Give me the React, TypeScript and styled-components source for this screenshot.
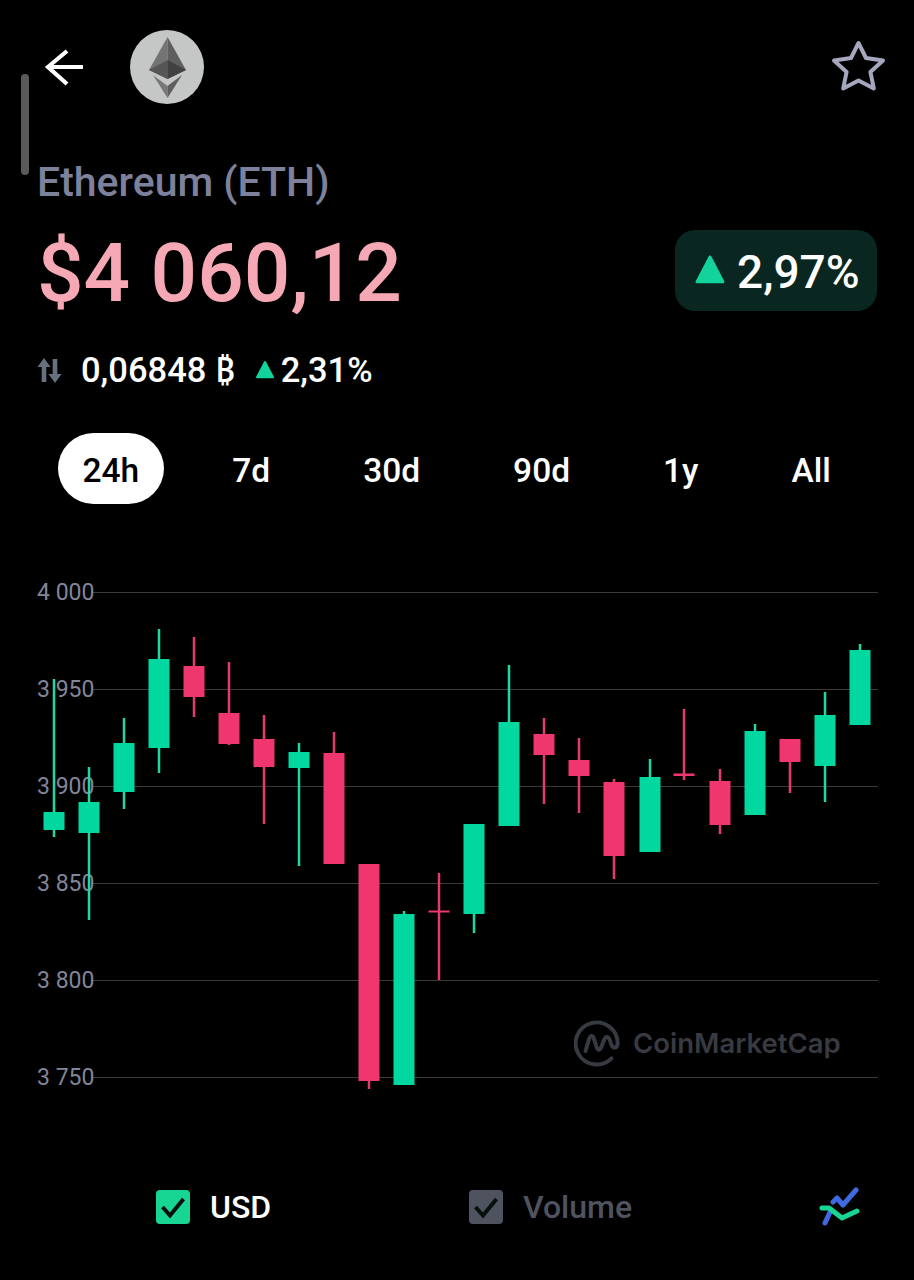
import React from "react";
import styled, { createGlobalStyle } from "styled-components";

const Global = createGlobalStyle`
  html, body { margin: 0; padding: 0; background: #000; }
  body { font-family: Roboto, "Noto Sans", sans-serif; }
`;

const Page = styled.div`
  position: relative;
  width: 914px;
  height: 1280px;
  overflow: hidden;
  background: #000;
  color: #fff;
`;

const ScrollThumb = styled.div`
  position: absolute;
  left: 21px;
  top: 74px;
  width: 8px;
  height: 101px;
  border-radius: 4px;
  background: #5a5a5a;
`;

const Header = styled.header`
  display: flex;
  align-items: center;
  height: 74px;
  padding: 30px 28px 0 43px;
`;

const IconSlot = styled.div`
  display: flex;
  margin-right: 44px;
`;

const Coin = styled.div`
  display: flex;
  flex: 1;
`;

const Title = styled.h1`
  margin: 56px 0 0 37px;
  font-size: 41px;
  line-height: 44px;
  font-weight: 500;
  color: #7d819b;
`;

const PriceRow = styled.div`
  display: flex;
  align-items: center;
  justify-content: space-between;
  height: 82px;
  margin-top: 25px;
  padding: 0 37px;
`;

const Price = styled.div`
  padding-top: 6px;
  font-size: 82px;
  line-height: 82px;
  font-weight: 500;
  color: #f6a9b4;
`;

const Badge = styled.div`
  display: flex;
  align-items: center;
  gap: 11px;
  width: 202px;
  height: 81px;
  box-sizing: border-box;
  padding-left: 19px;
  border-radius: 20px;
  background: #0a2620;
  font-size: 46px;
  font-weight: 500;
`;

const BadgeValue = styled.span`
  padding-top: 3px;
`;

const SubRow = styled.div`
  display: flex;
  align-items: center;
  height: 40px;
  margin-top: 39px;
  padding-left: 37px;
  font-size: 34.5px;
  line-height: 40px;
  font-weight: 500;
`;

const Rate = styled.span`
  margin-left: 19px;
`;

const Percent = styled.span`
  margin-left: 6px;
`;

const Triangle = styled.svg`
  display: block;
  flex: none;
`;

const SmallTriangle = styled(Triangle)`
  margin-left: 20px;
`;

const Tabs = styled.nav`
  display: flex;
  gap: 44px;
  margin-top: 43px;
  padding-left: 58px;
`;

const Tab = styled.div<{ $active?: boolean }>`
  height: 71px;
  padding: 0 24.5px;
  border-radius: 36px;
  font-size: 33.5px;
  font-weight: 500;
  line-height: 75px;
  color: ${(p) => (p.$active ? "#000" : "#fff")};
  background: ${(p) => (p.$active ? "#fff" : "transparent")};
`;

const ChartArea = styled.section`
  position: relative;
  height: 540px;
  margin-top: 66px;
`;

const ChartSvg = styled.svg`
  display: block;
`;

const AxisLabel = styled.text`
  font-family: Roboto, sans-serif;
  font-size: 23px;
  fill: #82859a;
`;

const Watermark = styled.div`
  position: absolute;
  left: 574px;
  top: 449px;
  display: flex;
  align-items: center;
  gap: 13px;
  font-family: Inter, sans-serif;
  font-size: 27.5px;
  font-weight: 600;
  color: #383a42;
`;

const Legend = styled.footer`
  display: grid;
  grid-template-columns: 313px 1fr auto;
  align-items: center;
  height: 40px;
  margin-top: 77px;
  padding: 0 53px 0 156px;
  font-size: 32px;
  font-weight: 500;
`;

const LegendItem = styled.div<{ $muted?: boolean }>`
  display: flex;
  align-items: center;
  gap: 20px;
  color: ${(p) => (p.$muted ? "#4f535f" : "#fff")};
`;

type Candle = [number, number, number, number, number, 0 | 1];
// x centre, wick top, body top, body bottom, wick bottom, up?
const candles: Candle[] = [
  [54, 679, 812, 830, 837, 1],
  [89, 767, 802, 833, 920, 1],
  [124, 718, 743, 792, 809, 1],
  [159, 629, 659, 748, 773, 1],
  [194, 637, 666, 697, 717, 0],
  [229, 662, 713, 744, 745, 0],
  [264, 715, 739, 767, 824, 0],
  [299, 743, 752, 768, 866, 1],
  [334, 732, 753, 864, 864, 0],
  [369, 864, 864, 1081, 1089, 0],
  [404, 911, 914, 1085, 1085, 1],
  [439, 873, 910.5, 912.5, 980, 0],
  [474, 824, 824, 914, 933, 1],
  [509, 665, 722, 826, 826, 1],
  [544, 718, 734, 755, 804, 0],
  [579, 738, 760, 776, 813, 0],
  [614, 779, 782, 856, 879, 0],
  [650, 759, 777, 852, 852, 1],
  [684, 709, 773.5, 776, 780, 0],
  [720, 769, 781, 825, 834, 0],
  [755, 724, 731, 815, 815, 1],
  [790, 739, 739, 762, 793, 0],
  [825, 692, 715, 766, 802, 1],
  [860, 644, 650, 725, 725, 1],
];

const grid = [
  { y: 592.5, label: "4 000" },
  { y: 689.5, label: "3 950" },
  { y: 786.5, label: "3 900" },
  { y: 883.5, label: "3 850" },
  { y: 980.5, label: "3 800" },
  { y: 1077.5, label: "3 750" },
];

const GREEN = "#01d8a0";
const RED = "#f0366e";

const UpTriangle = ({ size }: { size: number }) => (
  <Triangle width={size} height={size} viewBox="0 0 30 30">
    <path d="M15 3 L27 26 L3 26 Z" fill="#12d39c" stroke="#12d39c" strokeWidth="3" strokeLinejoin="round" />
  </Triangle>
);

const CheckBox = ({ fill }: { fill: string }) => (
  <svg width="34" height="34" viewBox="0 0 34 34">
    <rect width="34" height="34" rx="4" fill={fill} />
    <path d="M6.5 17 L14 25.5 L27.5 9" fill="none" stroke="#07100d" strokeWidth="4" />
  </svg>
);

export default function App() {
  return (
    <Page>
      <Global />
      <ScrollThumb />
      <Header>
        <IconSlot>
          <svg width="43" height="44" viewBox="43 45 43 44">
            <path d="M48 67 H83 M67 51 L48 67 L67 84" fill="none" stroke="#fff" strokeWidth="4.2" />
          </svg>
        </IconSlot>
        <Coin>
          <svg width="74" height="74" viewBox="130 30 74 74">
            <circle cx="167" cy="67" r="37" fill="#c5c7c6" />
            <path d="M167.5 37 L149 70 L167.5 79 Z" fill="#747474" />
            <path d="M167.5 37 L186 70 L167.5 79 Z" fill="#5e5e5e" />
            <path d="M149 70 L167.5 60 L167.5 79 Z" fill="#565656" />
            <path d="M186 70 L167.5 60 L167.5 79 Z" fill="#414141" />
            <path d="M153 75 L167.5 86 L167.5 98 Z" fill="#787878" />
            <path d="M182 75 L167.5 86 L167.5 98 Z" fill="#5e5e5e" />
          </svg>
        </Coin>
        <svg width="55" height="54" viewBox="831 41 55 54">
          <path
            d="M858.5 44 L866 59 L883 61.5 L870.4 72.9 L873.8 89.5 L858.5 81.5 L843.2 89.5 L846.6 72.9 L834 61.5 L851 59 Z"
            fill="none"
            stroke="#a5a7be"
            strokeWidth="4"
            strokeLinejoin="round"
          />
        </svg>
      </Header>

      <Title>Ethereum (ETH)</Title>

      <PriceRow>
        <Price>$4 060,12</Price>
        <Badge>
          <UpTriangle size={32} />
          <BadgeValue>2,97%</BadgeValue>
        </Badge>
      </PriceRow>

      <SubRow>
        <svg width="25" height="25" viewBox="0 0 25 25">
          <path
            d="M7 0 L13.5 9 H9.3 V24 H4.7 V9 H.5 Z M18 25 L11.5 16 H15.7 V1 H20.3 V16 H24.5 Z"
            fill="#66717f"
          />
        </svg>
        <Rate>0,06848 ₿</Rate>
        <SmallTriangle width="20" height="20" viewBox="0 0 30 30">
          <path d="M15 3 L27 26 L3 26 Z" fill="#12d39c" stroke="#12d39c" strokeWidth="3" strokeLinejoin="round" />
        </SmallTriangle>
        <Percent>2,31%</Percent>
      </SubRow>

      <Tabs>
        <Tab $active>24h</Tab>
        <Tab>7d</Tab>
        <Tab>30d</Tab>
        <Tab>90d</Tab>
        <Tab>1y</Tab>
        <Tab>All</Tab>
      </Tabs>

      <ChartArea>
        <ChartSvg width="914" height="540" viewBox="0 570 914 540">
          {grid.map((g) => (
            <g key={g.label}>
              <line x1="93" x2="878" y1={g.y} y2={g.y} stroke="#3a3a3a" strokeWidth="1" />
              <AxisLabel x="37" y={g.y + 7.5}>
                {g.label}
              </AxisLabel>
            </g>
          ))}
          {candles.map(([x, wt, bt, bb, wb, up]) => {
            const c = up ? GREEN : RED;
            return (
              <g key={x}>
                <rect x={x - 1.25} y={wt} width="2.5" height={wb - wt} fill={up ? "#22d6a2" : "#e43a6c"} />
                <rect x={x - 10.5} y={bt} width="21" height={bb - bt} fill={c} />
              </g>
            );
          })}
        </ChartSvg>
        <Watermark>
          <svg width="46" height="48" viewBox="100 50 140 146">
            <path
              d="M214 170 A64 64 0 1 1 233 125 C231 140 218 142 212 124 C206 100 196 98 190 118 L182 138 C178 146 172 146 169 136 L160 108 C156 98 150 100 146 110 L135 148"
              fill="none"
              stroke="#383a42"
              strokeWidth="12"
              strokeLinecap="round"
            />
          </svg>
          <span>CoinMarketCap</span>
        </Watermark>
      </ChartArea>

      <Legend>
        <LegendItem>
          <CheckBox fill="#17d693" />
          USD
        </LegendItem>
        <LegendItem $muted>
          <CheckBox fill="#4f535f" />
          Volume
        </LegendItem>
        <svg width="42" height="40" viewBox="820 1186 42 40">
          <path d="M826 1222 L832 1209 M834 1201 L838 1197 L844 1204 L857 1189" fill="none" stroke="#3e6ae1" strokeWidth="5" strokeLinecap="round" strokeLinejoin="round" />
          <path d="M823 1207 H830 L843 1217 L858 1210" fill="none" stroke="#17d693" strokeWidth="5" strokeLinecap="round" strokeLinejoin="round" />
        </svg>
      </Legend>
    </Page>
  );
}
